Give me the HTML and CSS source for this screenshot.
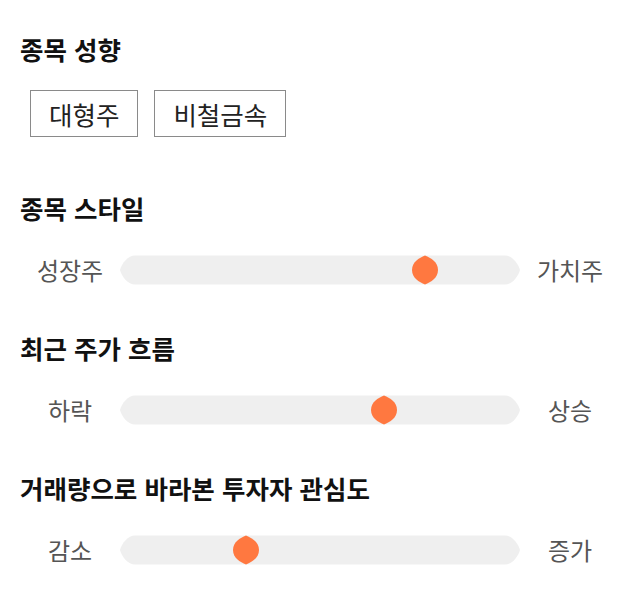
FILE: index.html
```html
<!DOCTYPE html>
<html lang="ko">
<head>
<meta charset="utf-8">
<link rel="stylesheet" href="styles.css">
</head>
<body>
<div class="page">
  <section class="sec sec-first">
    <h2 class="title">종목 성향</h2>
    <div class="tags">
      <span class="tag">대형주</span>
      <span class="tag">비철금속</span>
    </div>
  </section>

  <section class="sec">
    <h2 class="title">종목 스타일</h2>
    <div class="slider">
      <span class="lab">성장주</span>
      <svg class="track" width="400" height="30" viewBox="0 0 400 30">
        <path class="trk" d="M15,0.5 H385 C392,0.5 398,8 400,15 C398,22 392,29.5 385,29.5 H15 C8,29.5 2,22 0,15 C2,8 8,0.5 15,0.5 Z"/>
        <path class="thumb" transform="translate(305,15)" d="M0,-14.5 C6,-12 13,-8 13,0 C13,8 6,12 0,14.5 C-6,12 -13,8 -13,0 C-13,-8 -6,-12 0,-14.5 Z"/>
      </svg>
      <span class="lab">가치주</span>
    </div>
  </section>

  <section class="sec">
    <h2 class="title">최근 주가 흐름</h2>
    <div class="slider">
      <span class="lab">하락</span>
      <svg class="track" width="400" height="30" viewBox="0 0 400 30">
        <path class="trk" d="M15,0.5 H385 C392,0.5 398,8 400,15 C398,22 392,29.5 385,29.5 H15 C8,29.5 2,22 0,15 C2,8 8,0.5 15,0.5 Z"/>
        <path class="thumb" transform="translate(264,15)" d="M0,-14.5 C6,-12 13,-8 13,0 C13,8 6,12 0,14.5 C-6,12 -13,8 -13,0 C-13,-8 -6,-12 0,-14.5 Z"/>
      </svg>
      <span class="lab">상승</span>
    </div>
  </section>

  <section class="sec">
    <h2 class="title">거래량으로 바라본 투자자 관심도</h2>
    <div class="slider">
      <span class="lab">감소</span>
      <svg class="track" width="400" height="30" viewBox="0 0 400 30">
        <path class="trk" d="M15,0.5 H385 C392,0.5 398,8 400,15 C398,22 392,29.5 385,29.5 H15 C8,29.5 2,22 0,15 C2,8 8,0.5 15,0.5 Z"/>
        <path class="thumb" transform="translate(126,15)" d="M0,-14.5 C6,-12 13,-8 13,0 C13,8 6,12 0,14.5 C-6,12 -13,8 -13,0 C-13,-8 -6,-12 0,-14.5 Z"/>
      </svg>
      <span class="lab">증가</span>
    </div>
  </section>
</div>
</body>
</html>
```

FILE: styles.css
```css
html, body {
  margin: 0;
  padding: 0;
  background: #ffffff;
}

body {
  font-family: "Noto Sans CJK KR", "Noto Sans", sans-serif;
  color: #111111;
}

.page {
  padding: 33px 20px 0 20px;
  display: flex;
  flex-direction: column;
}

.sec {
  display: flex;
  flex-direction: column;
}

.sec + .sec {
  margin-top: 47px;
}

.sec-first + .sec {
  margin-top: 55px;
}

.title {
  margin: 0;
  font-size: 25.5px;
  line-height: 32px;
  font-weight: 700;
  color: #111111;
}

.tags {
  display: flex;
  gap: 16px;
  margin-top: 25px;
  padding-left: 10px;
}

.tag {
  box-sizing: border-box;
  height: 47px;
  padding: 0 18px;
  border: 1px solid #8a8a8a;
  display: flex;
  align-items: center;
  font-size: 25.5px;
  color: #222222;
}

.slider {
  display: flex;
  align-items: center;
  margin-top: 31px;
  height: 30px;
}

.lab {
  width: 100px;
  text-align: center;
  font-size: 24px;
  color: #555555;
  line-height: 30px;
}

.track {
  display: block;
  flex: none;
}

.trk {
  fill: #efefef;
}

.thumb {
  fill: #ff7840;
}
```
